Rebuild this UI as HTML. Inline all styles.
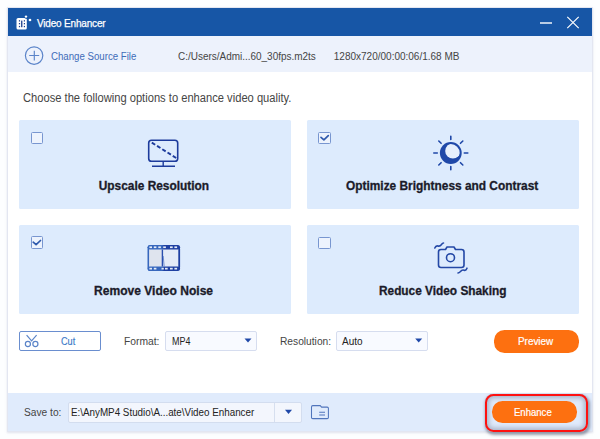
<!DOCTYPE html>
<html><head><meta charset="utf-8">
<style>
*{margin:0;padding:0;box-sizing:border-box}
html,body{width:600px;height:439px;overflow:hidden;background:#fdfeff}
body{position:relative;font-family:"Liberation Sans",sans-serif}
.a{position:absolute}
svg{position:absolute;overflow:visible}
.t{position:absolute;white-space:nowrap;line-height:1;transform-origin:0 0}
#win{left:8px;top:8px;width:584px;height:423px;background:#fff;box-shadow:0 0 0 1px #e3e6f1,0 1px 2px 1px rgba(200,204,220,.55)}
#title{left:8px;top:8px;width:584px;height:28px;background:#1756a6}
#info{left:8px;top:36px;width:584px;height:36px;background:#edf2fc}
.card{position:absolute;width:272px;height:89px;background:#ddebfd;border-radius:1.5px}
.cb{position:absolute;width:12.2px;height:12.4px;border:1.2px solid #7896d0;border-radius:1.5px;background:#edf3fd}
.lbl{position:absolute;left:0;width:272px;text-align:center;font-weight:700;font-size:11.9px;color:#1b1b2a;line-height:1}
.btn{position:absolute;border-radius:10.5px;background:#fd7010;color:#fff;font-size:10px;text-align:center}
#bottom{left:8px;top:393px;width:584px;height:38px;background:#e0ebfc}
.dd{position:absolute;border:1px solid #d6ddef;border-radius:2px;background:#f8faff}
</style></head><body>
<div class="a" id="win"></div>
<div class="a" id="title"></div>
<div class="a" id="info"></div>
<div class="a" id="bottom"></div>

<!-- title icon -->
<svg style="left:0;top:0" width="600" height="40">
  <rect x="16.5" y="18" width="10.3" height="11.5" rx="1.6" fill="#fff"/>
  <g fill="#1a3d8c">
    <rect x="18.9" y="20.2" width="1.2" height="1.3"/><rect x="18.9" y="23" width="1.2" height="1.3"/><rect x="18.9" y="25.9" width="1.2" height="1.3"/>
    <rect x="23.8" y="20.2" width="1.2" height="1.3"/><rect x="23.8" y="23" width="1.2" height="1.3"/><rect x="23.8" y="25.9" width="1.2" height="1.3"/>
    <rect x="21.1" y="20.6" width="1.3" height="6.6"/>
  </g>
  <circle cx="26" cy="16.6" r="2.1" fill="#1756a6"/>
  <circle cx="26" cy="16.6" r="1.2" fill="#fff"/>
  <circle cx="30" cy="20" r="1.35" fill="#fff"/>
  <!-- window controls -->
  <line x1="540" y1="23" x2="552" y2="23" stroke="#fff" stroke-width="1.4"/>
  <path d="M567.3 16.8 L578.7 28.2 M578.7 16.8 L567.3 28.2" stroke="#fff" stroke-width="1.15" fill="none"/>
</svg>
<div class="t" style="left:37.00px;top:17.50px;font-size:10.9px;font-weight:400;color:#fff;letter-spacing:-0.2px;transform:scaleX(0.919);-webkit-text-stroke:0.25px #fff">Video Enhancer</div>

<!-- info bar -->
<svg style="left:0;top:0" width="60" height="80">
  <circle cx="34.1" cy="55.6" r="8.7" fill="none" stroke="#5b84c9" stroke-width="1.2"/>
  <path d="M34.3 50.8 V60.4 M29.2 55.5 H39.2" stroke="#5b84c9" stroke-width="1.15"/>
</svg>
<div class="t" style="left:51.00px;top:51.70px;font-size:10px;font-weight:400;color:#3f6cb8;letter-spacing:0px;transform:scaleX(0.966)">Change Source File</div>
<div class="t" style="left:178.00px;top:51.60px;font-size:10px;font-weight:400;color:#454545;letter-spacing:0px;transform:scaleX(0.996)">C:/Users/Admi...60_30fps.m2ts</div>
<div class="t" style="left:333.80px;top:51.60px;font-size:10px;font-weight:400;color:#454545;letter-spacing:0px;transform:scaleX(1.000)">1280x720/00:00:06/1.68 MB</div>
<div class="t" style="left:22.57px;top:92.20px;font-size:12px;font-weight:400;color:#454545;letter-spacing:0px;transform:scaleX(0.930)">Choose the following options to enhance video quality.</div>

<!-- cards -->
<div class="card" style="left:19px;top:120px"><div class="cb" style="left:11.9px;top:11.6px"></div></div>
<div class="card" style="left:307px;top:120px"><div class="cb" style="left:11.4px;top:11.7px"></div></div>
<div class="card" style="left:19px;top:225px"><div class="cb" style="left:11.9px;top:11.2px"></div></div>
<div class="card" style="left:307px;top:225px"><div class="cb" style="left:11.4px;top:11.7px"></div></div>

<div class="t" style="left:98.75px;top:181.00px;font-size:11.9px;font-weight:700;color:#1b1b2a;letter-spacing:0px;transform:scaleX(1.000);-webkit-text-stroke:0.3px #1b1b2a">Upscale Resolution</div>
<div class="t" style="left:346.00px;top:181.00px;font-size:11.9px;font-weight:700;color:#1b1b2a;letter-spacing:0px;transform:scaleX(1.000);-webkit-text-stroke:0.3px #1b1b2a">Optimize Brightness and Contrast</div>
<div class="t" style="left:94.39px;top:286.30px;font-size:11.9px;font-weight:700;color:#1b1b2a;letter-spacing:0px;transform:scaleX(1.014);-webkit-text-stroke:0.3px #1b1b2a">Remove Video Noise</div>
<div class="t" style="left:378.50px;top:286.30px;font-size:11.9px;font-weight:700;color:#1b1b2a;letter-spacing:0px;transform:scaleX(0.996);-webkit-text-stroke:0.3px #1b1b2a">Reduce Video Shaking</div>
<svg style="left:0;top:0" width="600" height="320">
  <!-- checks -->
  <path d="M321 137.3 L323.9 139.8 L328.3 135.6" fill="none" stroke="#2f5aad" stroke-width="1.7" stroke-linecap="round" stroke-linejoin="round"/>
  <path d="M33.2 242.2 L36.1 244.7 L40.5 240.5" fill="none" stroke="#2f5aad" stroke-width="1.7" stroke-linecap="round" stroke-linejoin="round"/>
  <!-- monitor -->
  <g stroke="#1d3b9c" fill="none">
    <rect x="148.7" y="140.2" width="29" height="21" rx="2.8" stroke-width="1.6"/>
    <path d="M151.8 142.6 L176.5 158.2" stroke-width="1.9" stroke-dasharray="4 2.2"/>
    <path d="M163.2 162 V165.5 M152 166.2 H175" stroke-width="1.4"/>
  </g>
  <!-- sun -->
  <defs><clipPath id="sc"><circle cx="450.8" cy="153" r="8.9"/></clipPath></defs>
  <g stroke="#1f48a8" fill="none" stroke-width="1.6" stroke-linecap="round">
    <path d="M450.8 136.3 V139.5 M450.8 166.5 V169.7 M433.8 153 H437.3 M464.3 153 H467.8 M438.8 141 L441.1 143.3 M462.8 141 L460.5 143.3 M438.8 165 L441.1 162.7 M462.8 165 L460.5 162.7"/>
  </g>
  <circle cx="450.8" cy="153" r="10.9" fill="#1f48a8"/>
  <circle cx="452.9" cy="150.9" r="7.7" fill="#e6effc" clip-path="url(#sc)"/>
  <!-- film -->
  <defs><linearGradient id="fg" x1="147" y1="0" x2="181" y2="0" gradientUnits="userSpaceOnUse">
    <stop offset="0" stop-color="#3767bd"/><stop offset="0.44" stop-color="#3767bd"/><stop offset="0.5" stop-color="#1f40a2"/><stop offset="1" stop-color="#1f40a2"/></linearGradient></defs>
  <g>
    <rect x="148.4" y="245.9" width="30.8" height="24.2" rx="3" fill="#e4ebf8" stroke="url(#fg)" stroke-width="1.8"/>
    <rect x="149.3" y="249.5" width="12.6" height="17" fill="#dfe4ee"/>
    <rect x="147.5" y="245" width="32.6" height="4.5" rx="2.6" fill="url(#fg)"/>
    <rect x="147.5" y="266.4" width="32.6" height="4.6" rx="2.6" fill="url(#fg)"/>
    <g fill="#e6edf8">
      <rect x="149.4" y="246.4" width="2.6" height="1.7"/><rect x="153.8" y="246.4" width="2.6" height="1.7"/><rect x="158.3" y="246.4" width="2.6" height="1.7"/><rect x="163.2" y="246.4" width="2.7" height="1.7"/><rect x="170" y="246.4" width="2.7" height="1.7"/><rect x="174.4" y="246.4" width="2.7" height="1.7"/>
      <rect x="149.4" y="267.8" width="2.6" height="1.7"/><rect x="153.8" y="267.8" width="2.6" height="1.7"/><rect x="161.5" y="267.8" width="2.3" height="1.7"/><rect x="165" y="267.8" width="2.7" height="1.7"/><rect x="170" y="267.8" width="2.7" height="1.7"/><rect x="174.4" y="267.8" width="2.7" height="1.7"/>
    </g>
    <path d="M162.4 249.5 V266.5" stroke="#2a4fae" stroke-width="1.4"/>
    <path d="M163.2 256 L164.2 266.5" stroke="#4a6dc0" stroke-width="1" opacity=".7"/>
  </g>
  <!-- camera -->
  <g stroke="#2448a6" fill="none" stroke-width="1.6" stroke-linejoin="round" stroke-linecap="round">
    <path d="M441 249.5 H445.5 L447 247 H454 L455.5 249.5 H461.5 Q464 249.5 464 252 V265 Q464 267.5 461.5 267.5 H441 Q438.5 267.5 438.5 265 V252 Q438.5 249.5 441 249.5 Z"/>
    <circle cx="450.5" cy="257.7" r="4"/>
    <path d="M434.8 248 Q435.8 245.5 438 246 Q440 246.6 441.5 244.5 Q442.5 243 443.5 243"/>
    <path d="M458 273 Q459 273 460.5 271.5 Q462 269.6 464 270.2 Q466 270.8 467 268.2"/>
  </g>
</svg>

<!-- controls row -->
<div class="a" style="left:19px;top:331px;width:82px;height:20px;border:1.2px solid #6a8ecf;border-radius:2px"></div>
<svg style="left:0;top:0" width="120" height="360">
  <g stroke="#5b84c8" fill="none" stroke-width="1.2">
    <circle cx="27.9" cy="344" r="2.55"/><circle cx="35.4" cy="344" r="2.55"/>
    <path d="M26.6 335.2 L31.6 340.8 L36.6 335.2"/>
  </g>
</svg>
<div class="t" style="left:61.30px;top:336.70px;font-size:10px;font-weight:400;color:#3b78c8;letter-spacing:0px;transform:scaleX(0.913);-webkit-text-stroke:0.15px #3b78c8">Cut</div>
<div class="t" style="left:124.27px;top:337.20px;font-size:10px;font-weight:400;color:#454545;letter-spacing:0px;transform:scaleX(1.030)">Format:</div>
<div class="dd" style="left:165px;top:331px;width:92px;height:20px"></div>
<div class="t" style="left:171.71px;top:337.20px;font-size:10px;font-weight:400;color:#222;letter-spacing:0px;transform:scaleX(0.895)">MP4</div>
<div class="t" style="left:279.98px;top:337.20px;font-size:10px;font-weight:400;color:#454545;letter-spacing:0px;transform:scaleX(1.021)">Resolution:</div>
<div class="dd" style="left:336px;top:331px;width:92px;height:20px"></div>
<div class="t" style="left:342.00px;top:337.20px;font-size:10px;font-weight:400;color:#222;letter-spacing:0px;transform:scaleX(1.000)">Auto</div>
<svg style="left:0;top:0" width="600" height="360">
  <path d="M244.5 338.5 H251.5 L248 342.5 Z" fill="#1f48a8"/>
  <path d="M415.2 338.5 H422.2 L418.7 342.5 Z" fill="#1f48a8"/>
</svg>
<div class="btn" style="left:494px;top:329.7px;width:85px;height:23px"></div>
<div class="t" style="left:518.01px;top:337.10px;font-size:10px;font-weight:400;color:#fff;letter-spacing:0px;transform:scaleX(0.989);-webkit-text-stroke:0.2px #fff">Preview</div>

<!-- bottom -->
<div class="t" style="left:23.78px;top:407.70px;font-size:10px;font-weight:400;color:#454545;letter-spacing:0px;transform:scaleX(1.020)">Save to:</div>
<div class="dd" style="left:67.5px;top:401.5px;width:234px;height:21px;border-color:#d3ddef;background:#f3f6fd"></div>
<div class="a" style="left:274.2px;top:402.5px;width:1px;height:19px;background:#d6dfef"></div>
<div class="t" style="left:71.32px;top:407.70px;font-size:10px;font-weight:400;color:#222;letter-spacing:0px;transform:scaleX(0.982)">E:\AnyMP4 Studio\A...ate\Video Enhancer</div>
<svg style="left:0;top:0" width="600" height="439">
  <path d="M285 409.7 H292 L288.5 414 Z" fill="#1f48a8"/>
  <g stroke="#5075bc" fill="none" stroke-width="1.05">
    <path d="M312.8 418.6 H327.2 Q328.4 418.6 328.4 417.4 V408.3 Q328.4 407.1 327.2 407.1 H321.6 L320.2 405.6 H312.8 Q311.5 405.6 311.5 406.9 V417.4 Q311.5 418.6 312.8 418.6 Z"/>
    <path d="M319.2 412.2 H325 M319.2 414.9 H325"/>
  </g>
</svg>
<div class="a" style="left:485px;top:394px;width:103px;height:38px;border-radius:8px;box-shadow:1px 2px 3px 1px rgba(60,70,95,.5),inset 0 0 5px 4px rgba(120,132,155,.55)"></div>
<div class="btn" style="left:492px;top:400.5px;width:85px;height:22.5px"></div>
<div class="t" style="left:514.44px;top:407.75px;font-size:10px;font-weight:400;color:#fff;letter-spacing:0px;transform:scaleX(0.955);-webkit-text-stroke:0.2px #fff">Enhance</div>
<div class="a" style="left:484.6px;top:393.5px;width:103.8px;height:38.6px;border:2.7px solid #fe1111;border-radius:8.5px"></div>
</body></html>
